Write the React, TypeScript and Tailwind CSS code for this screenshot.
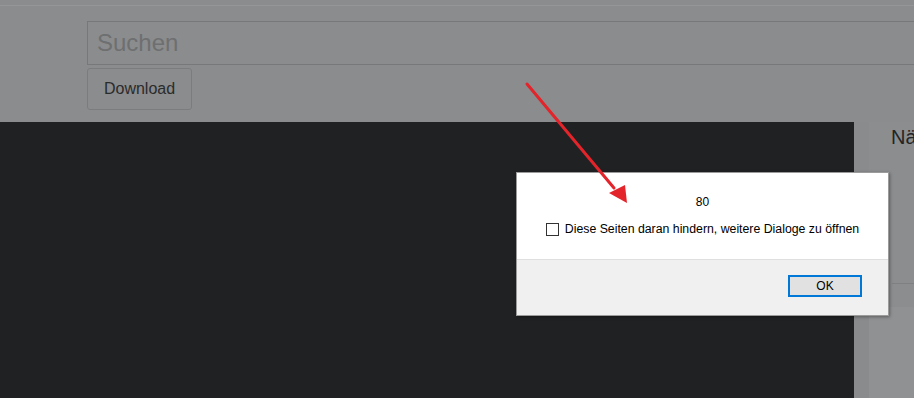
import React from 'react';

export default function App() {
  return (
    <div className="relative w-[914px] h-[398px] overflow-hidden bg-[#8b8c8d] font-['Liberation_Sans',Arial,sans-serif]">
      {/* dimmed page header */}
      <div className="h-[122px]">
        <div className="h-[5px]" />
        <div className="h-px bg-[#959697]" />
        <div className="pl-[87px] pt-[15px]">
          <div className="h-[44px] w-[900px] border border-[#777879] flex items-center pl-[9px]">
            <span className="text-[24px] text-[#6e6f70]">Suchen</span>
          </div>
          <div className="mt-[3px] w-[105px] h-[42px] border border-[#7b7c7d] rounded-[3px] flex items-center justify-center">
            <span className="text-[16px] text-[#2a2b2c]">Download</span>
          </div>
        </div>
      </div>

      {/* dark player area + right sidebar */}
      <div className="flex h-[276px]">
        <div className="w-[854px] shrink-0 bg-[#202122]" />
        <div className="w-[15px] shrink-0 bg-[#8a8b8c]" />
        <div className="w-[45px] shrink-0 overflow-hidden flex flex-col bg-[#8c8d8e]">
          <div className="pl-[22px] h-[161px] whitespace-nowrap">
            <span className="text-[20px] text-[#232425]">Nä</span>
          </div>
          <div className="ml-[23px] h-px bg-[#7f8081]" />
          <div className="h-[23px]" />
          <div className="flex-1 bg-[#909192]" />
        </div>
      </div>

      {/* alert dialog */}
      <div className="absolute left-[516px] top-[172px] w-[373px] h-[144px] border border-[#9b9b9b] bg-white shadow-[1px_1px_3px_rgba(0,0,0,0.35)] flex flex-col text-[12px] text-black">
        <div className="h-[86px] flex flex-col items-center pt-[21px]">
          <div className="leading-[16px]">80</div>
          <div className="mt-[11px] flex items-center gap-[6px] leading-[16px]">
            <div className="w-[13px] h-[13px] border border-[#333333] bg-white" />
            <span className="text-[12.3px]">Diese Seiten daran hindern, weitere Dialoge zu öffnen</span>
          </div>
        </div>
        <div className="h-px bg-[#dfdfdf]" />
        <div className="flex-1 bg-[#f0f0f0] flex justify-end items-start pt-[15px] pr-[26px]">
          <div className="w-[74px] h-[22px] border-2 border-[#0078d7] bg-[#e1e1e1] flex items-center justify-center leading-none">
            OK
          </div>
        </div>
      </div>

      {/* red arrow drawn over everything */}
      <svg className="absolute left-0 top-0 pointer-events-none" width="914" height="398" viewBox="0 0 914 398">
        <line x1="527" y1="84" x2="614" y2="188" stroke="#e3242b" strokeWidth="3" strokeLinecap="round" />
        <polygon points="627,203 609,193 625,185" fill="#e3242b" />
      </svg>
    </div>
  );
}
